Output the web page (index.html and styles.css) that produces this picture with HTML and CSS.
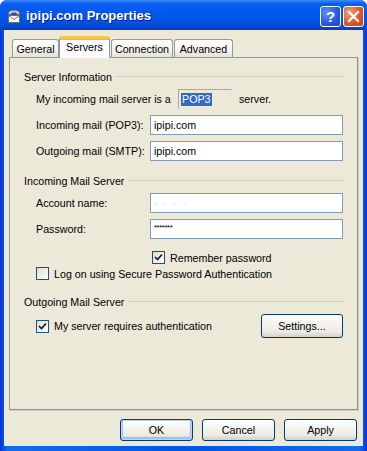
FILE: index.html
```html
<!DOCTYPE html>
<html lang="en">
<head>
  <meta charset="UTF-8">
  <title>ipipi.com Properties</title>
  <link rel="stylesheet" href="styles.css">
</head>
<body>
<div class="window">
  <div class="titlebar">
    <svg class="app-icon" width="16" height="16" viewBox="0 0 16 16">
      <path d="M2 6 Q2 2 8 2 Q14 2 14 6 L11 7 L10 5 L6 5 L5 7 Z" fill="#c8c8c8" stroke="#5a5a5a" stroke-width="1"/>
      <rect x="2.5" y="7.5" width="11" height="7" fill="#fff" stroke="#6d6d6d"/>
      <path d="M2.5 7.5 L8 11.5 L13.5 7.5" fill="none" stroke="#6d6d6d"/>
    </svg>
    <span class="title">ipipi.com Properties</span>
    <div class="caption-btns">
      <span class="cap-btn help">?</span>
      <span class="cap-btn close">
        <svg width="13" height="13" viewBox="0 0 13 13">
          <path d="M2 2 L11 11 M11 2 L2 11" stroke="#fff" stroke-width="2.2" stroke-linecap="square"/>
        </svg>
      </span>
    </div>
  </div>

  <div class="client">
    <div class="tabs">
      <span class="tab tab-general">General</span>
      <span class="tab selected">Servers</span>
      <span class="tab tab-connection">Connection</span>
      <span class="tab tab-advanced">Advanced</span>
    </div>

    <div class="panel">
      <div class="group-head"><span>Server Information</span></div>
      <div class="row r-first">
        <span class="label-long">My incoming mail server is a</span>
        <span class="readonly"><span class="sel">POP3</span></span>
        <span class="after">server.</span>
      </div>
      <div class="row r-field">
        <span class="label">Incoming mail (POP3):</span>
        <span class="input">ipipi.com</span>
      </div>
      <div class="row r-field">
        <span class="label">Outgoing mail (SMTP):</span>
        <span class="input">ipipi.com</span>
      </div>

      <div class="group-head g-second"><span>Incoming Mail Server</span></div>
      <div class="row r-field">
        <span class="label">Account name:</span>
        <span class="input blurred">&#183; &#183; &#183;&nbsp;&#183;</span>
      </div>
      <div class="row r-field">
        <span class="label">Password:</span>
        <span class="input pwd">*******</span>
      </div>
      <div class="row r-check r-remember">
        <span class="checkbox checked"><svg width="11" height="11" viewBox="0 0 11 11"><path d="M2 5 L4.5 7.5 L9 2.5" fill="none" stroke="#1b1b1b" stroke-width="1.7"/></svg></span>
        <span class="check-label">Remember password</span>
      </div>
      <div class="row r-check r-spa">
        <span class="checkbox"></span>
        <span class="check-label">Log on using Secure Password Authentication</span>
      </div>

      <div class="group-head g-third"><span>Outgoing Mail Server</span></div>
      <div class="row r-auth">
        <span class="checkbox checked"><svg width="11" height="11" viewBox="0 0 11 11"><path d="M2 5 L4.5 7.5 L9 2.5" fill="none" stroke="#1b1b1b" stroke-width="1.7"/></svg></span>
        <span class="check-label grow">My server requires authentication</span>
        <span class="button settings">Settings...</span>
      </div>
    </div>

    <div class="dialog-btns">
      <span class="button dlg default">OK</span>
      <span class="button dlg">Cancel</span>
      <span class="button dlg">Apply</span>
    </div>
  </div>
</div>
</body>
</html>
```

FILE: styles.css
```css
body {
  margin: 0;
  font-family: 'Liberation Sans', Arial, sans-serif;
  font-size: 10.7px;
  color: #000;
  background: #fff;
}
.window {
  width: 367px;
  height: 451px;
  display: flex;
  flex-direction: column;
  background: linear-gradient(to right, #0831d9 0%, #166aee 2%, #0055e5 50%, #166aee 98%, #0831d9 100%);
  border-radius: 7px 7px 0 0;
  overflow: hidden;
}
.titlebar {
  height: 30px;
  flex: none;
  display: flex;
  align-items: center;
  padding-left: 6px;
  background: linear-gradient(#3c8cf6 0%, #0a5ef0 12%, #0058ee 40%, #0054e3 70%, #0046cc 92%, #003dc0 100%);
}
.app-icon {
  flex: none;
  margin-top: 1px;
}
.title {
  flex: 1;
  margin-left: 4px;
  color: #fff;
  font-weight: bold;
  font-size: 13px;
  text-shadow: 1px 1px 0 #0a1e8c;
}
.caption-btns {
  display: flex;
  gap: 2px;
  margin-right: 3px;
  margin-top: 2px;
}
.cap-btn {
  width: 21px;
  height: 21px;
  box-sizing: border-box;
  border: 1px solid #fff;
  border-radius: 3px;
  display: flex;
  align-items: center;
  justify-content: center;
  color: #fff;
  font-weight: bold;
  font-size: 15px;
}
.help {
  background: radial-gradient(circle at 30% 30%, #5d95fb, #2458df 60%, #1a45c4);
}
.close {
  background: radial-gradient(circle at 30% 30%, #f3a07a, #e2562b 55%, #c4401b);
}
.client {
  flex: 1;
  margin: 0 4px 5px 4px;
  background: #ece9d8;
}
.tabs {
  display: flex;
  align-items: flex-end;
  height: 22px;
  margin: 5px 0 0 8px;
}
.tab {
  box-sizing: border-box;
  height: 18px;
  border: 1px solid #919b9c;
  border-bottom: none;
  border-radius: 3px 3px 0 0;
  background: linear-gradient(#ffffff, #f3f2ec 60%, #e3e1d7);
  display: flex;
  align-items: center;
  justify-content: center;
}
.tab-general { width: 47px; }
.tab-connection { width: 62px; margin-left: 1px; }
.tab-advanced { width: 59px; margin-left: 1px; }
.tab.selected {
  width: 51px;
  height: 22px;
  background: #fcfcfe;
  border-top: 3px solid #ffc83c;
  box-shadow: inset 0 1px 0 #f7b34a;
  padding-bottom: 3px;
  position: relative;
  z-index: 1;
  margin-bottom: -1px;
}
.panel {
  box-sizing: border-box;
  width: 349px;
  height: 353px;
  margin-left: 5px;
  border: 1px solid #919b9c;
  border-right-color: #8b9394;
  border-bottom-color: #8b9394;
  box-shadow: 1px 1px 0 #d0cec4;
  padding: 12px 12px 0 14px;
}
.group-head {
  display: flex;
  align-items: center;
  height: 13px;
}
.group-head::after {
  content: '';
  flex: 1;
  height: 1px;
  margin-left: 4px;
  background: #d0d0bf;
}
.g-second { margin-top: 13px; }
.g-third { margin-top: 15px; }
.row {
  display: flex;
  align-items: center;
  margin-left: 12px;
  margin-right: 2px;
}
.r-first {
  height: 20px;
  margin-top: 6px;
}
.r-field {
  height: 20px;
  margin-top: 6px;
}
.label-long { width: 142px; flex: none; }
.label { width: 114px; flex: none; }
.readonly {
  box-sizing: border-box;
  width: 54px;
  height: 20px;
  border: 1px solid #a7a6aa;
  border-right-color: #e8e6dc;
  border-bottom-color: #e8e6dc;
  display: flex;
  align-items: center;
  padding-left: 2px;
}
.sel {
  background: #316ac5;
  color: #fff;
  padding: 0 1px;
  line-height: 13px;
}
.after { margin-left: 7px; }
.input {
  flex: 1;
  box-sizing: border-box;
  height: 20px;
  border: 1px solid #7f9db9;
  background: #fff;
  display: flex;
  align-items: center;
  padding-left: 3px;
}
.blurred {
  color: #b9b9b9;
  font-size: 9px;
  letter-spacing: 2px;
}
.pwd {
  font-size: 8px;
  letter-spacing: -0.5px;
  padding-bottom: 4px;
}
.r-check { height: 13px; }
.r-remember {
  margin-top: 12px;
  margin-left: 128px;
}
.r-spa { margin-top: 3px; }
.checkbox {
  box-sizing: border-box;
  width: 13px;
  height: 13px;
  flex: none;
  border: 1px solid #1c5180;
  background: linear-gradient(135deg, #dcdcd7, #ffffff);
  display: flex;
  align-items: center;
  justify-content: center;
}
.check-label { margin-left: 5px; }
.grow { flex: 1; }
.r-auth {
  height: 24px;
  margin-top: 6px;
}
.button {
  box-sizing: border-box;
  border: 1px solid #003c74;
  border-radius: 3px;
  background: linear-gradient(#ffffff 0%, #f4f3ee 40%, #ecebe6 75%, #d6d0c5 100%);
  display: flex;
  align-items: center;
  justify-content: center;
}
.settings {
  width: 82px;
  height: 24px;
}
.dialog-btns {
  display: flex;
  justify-content: flex-end;
  gap: 9px;
  margin-top: 9px;
  padding-right: 6px;
}
.dlg {
  width: 73px;
  height: 22px;
}
.dlg.default {
  box-shadow: inset 0 0 0 1px #c1d3fb, inset 0 -1px 0 2px #a5bef5;
}
```
